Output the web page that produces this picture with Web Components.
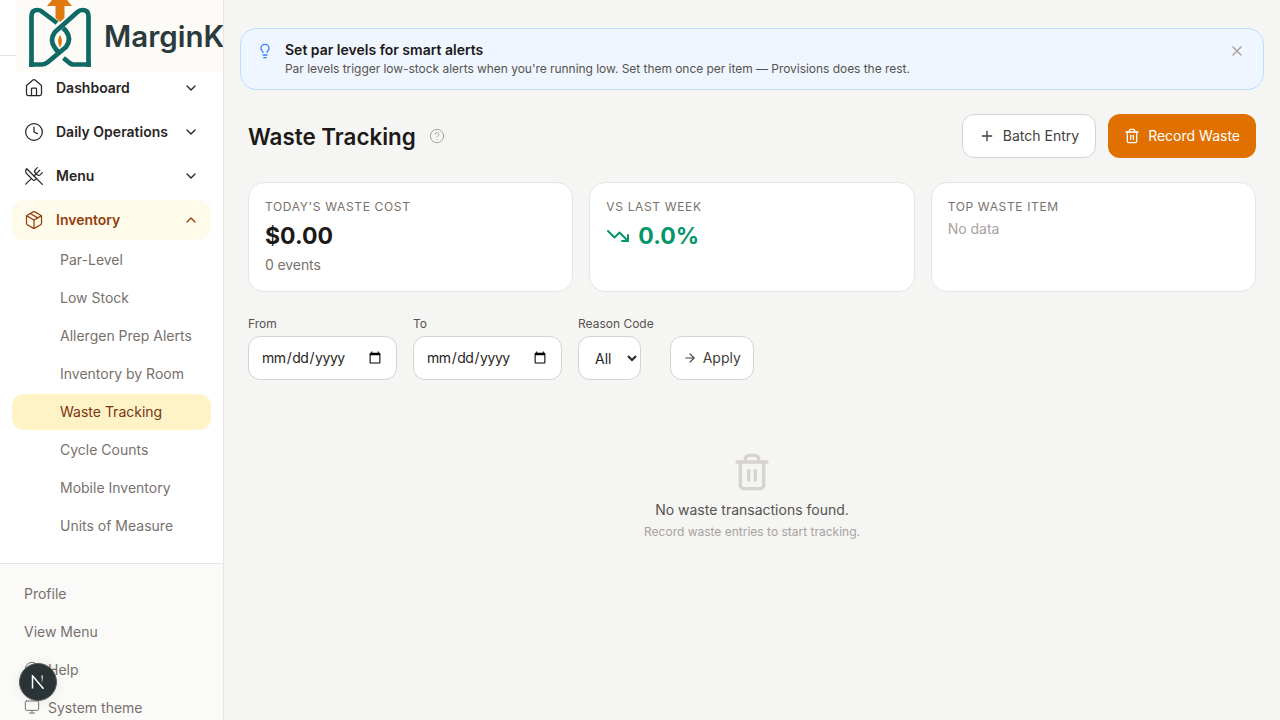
<!DOCTYPE html>
<html lang="en">
<head>
<meta charset="utf-8">
<title>Waste Tracking</title>
<style>
  html, body { margin: 0; height: 100%; }
  body { font-family: Inter, "Liberation Sans", sans-serif; background: #f5f5f4; color: #1c1917; overflow: hidden; }
</style>
</head>
<body>
<app-shell>
  <app-sidebar slot="sidebar">
    <nav-item icon="house" label="Dashboard"></nav-item>
    <nav-item icon="clock" label="Daily Operations"></nav-item>
    <nav-item icon="utensils" label="Menu"></nav-item>
    <nav-item icon="package" label="Inventory" open></nav-item>
    <sub-item>Par-Level</sub-item>
    <sub-item>Low Stock</sub-item>
    <sub-item>Allergen Prep Alerts</sub-item>
    <sub-item>Inventory by Room</sub-item>
    <sub-item active>Waste Tracking</sub-item>
    <sub-item>Cycle Counts</sub-item>
    <sub-item>Mobile Inventory</sub-item>
    <sub-item>Units of Measure</sub-item>
    <foot-item slot="foot">Profile</foot-item>
    <foot-item slot="foot">View Menu</foot-item>
    <foot-item slot="foot" icon="help">Help</foot-item>
    <foot-item slot="foot" icon="monitor">System theme</foot-item>
  </app-sidebar>
  <info-banner heading="Set par levels for smart alerts">Par levels trigger low-stock alerts when you're running low. Set them once per item — Provisions does the rest.</info-banner>
  <page-header heading="Waste Tracking"></page-header>
  <stat-row>
    <stat-card label="Today's Waste Cost" value="$0.00" note="0 events"></stat-card>
    <stat-card label="vs Last Week" value="0.0%" trend></stat-card>
    <stat-card label="Top Waste Item" empty="No data"></stat-card>
  </stat-row>
  <filter-bar></filter-bar>
  <empty-state heading="No waste transactions found." hint="Record waste entries to start tracking."></empty-state>
</app-shell>
<logo-banner></logo-banner>
<dev-badge></dev-badge>

<script>
const ICONS = {
  house: '<path d="M15 21v-8a1 1 0 0 0-1-1h-4a1 1 0 0 0-1 1v8"/><path d="M3 10a2 2 0 0 1 .709-1.528l7-5.999a2 2 0 0 1 2.582 0l7 5.999A2 2 0 0 1 21 10v9a2 2 0 0 1-2 2H5a2 2 0 0 1-2-2z"/>',
  clock: '<circle cx="12" cy="12" r="10"/><polyline points="12 6 12 12 16 14"/>',
  utensils: '<path d="m16 2-2.3 2.3a3 3 0 0 0 0 4.2l1.8 1.8a3 3 0 0 0 4.2 0L22 8"/><path d="M15 15 3.3 3.3a4.2 4.2 0 0 0 0 6l7.3 7.3c.7.7 2 .7 2.8 0L15 15Zm0 0 7 7"/><path d="m2.1 21.8 6.4-6.3"/><path d="m19 5-7 7"/>',
  package: '<path d="m7.5 4.27 9 5.15"/><path d="M21 8a2 2 0 0 0-1-1.73l-7-4a2 2 0 0 0-2 0l-7 4A2 2 0 0 0 3 8v8a2 2 0 0 0 1 1.73l7 4a2 2 0 0 0 2 0l7-4A2 2 0 0 0 21 16Z"/><path d="m3.3 7 8.7 5 8.7-5"/><path d="M12 22V12"/>',
  down: '<path d="m6 9 6 6 6-6"/>',
  up: '<path d="m18 15-6-6-6 6"/>',
  bulb: '<path d="M15 14c.2-1 .7-1.7 1.5-2.5 1-.9 1.5-2.2 1.5-3.5A6 6 0 0 0 6 8c0 1 .2 2.2 1.5 3.5.7.7 1.3 1.5 1.5 2.5"/><path d="M9 18h6"/><path d="M10 22h4"/>',
  help: '<circle cx="12" cy="12" r="10"/><path d="M9.09 9a3 3 0 0 1 5.83 1c0 2-3 3-3 3"/><path d="M12 17h.01"/>',
  x: '<path d="M18 6 6 18"/><path d="m6 6 12 12"/>',
  plus: '<path d="M5 12h14"/><path d="M12 5v14"/>',
  trash: '<path d="M3 6h18"/><path d="M19 6v14c0 1-1 2-2 2H7c-1 0-2-1-2-2V6"/><path d="M8 6V4c0-1 1-2 2-2h4c1 0 2 1 2 2v2"/><line x1="10" y1="11" x2="10" y2="17"/><line x1="14" y1="11" x2="14" y2="17"/>',
  trend: '<polyline points="22 17 13.5 8.5 8.5 13.5 2 7"/><polyline points="16 17 22 17 22 11"/>',
  arrow: '<path d="M5 12h14"/><path d="m12 5 7 7-7 7"/>',
  monitor: '<rect x="2" y="3" width="20" height="14" rx="2"/><line x1="8" y1="21" x2="16" y2="21"/><line x1="12" y1="17" x2="12" y2="21"/>',
};

const icon = (name, size, width = 2) =>
  `<svg width="${size}" height="${size}" viewBox="0 0 24 24" fill="none" stroke="currentColor" stroke-width="${width}" stroke-linecap="round" stroke-linejoin="round" style="display:block;flex:none">${ICONS[name]}</svg>`;

class Base extends HTMLElement {
  constructor() {
    super();
    this.attachShadow({ mode: "open" });
  }
  attr(name) {
    return this.getAttribute(name) || "";
  }
}

class AppShell extends Base {
  connectedCallback() {
    this.shadowRoot.innerHTML = /*html*/ `
      <style>
        :host { display: flex; width: 1280px; height: 720px; overflow: hidden; }
        main { flex: 1; min-width: 0; padding: 28px 16px 0; display: flex; flex-direction: column; }
      </style>
      <slot name="sidebar"></slot>
      <main><slot></slot></main>
    `;
  }
}

class AppSidebar extends Base {
  connectedCallback() {
    this.shadowRoot.innerHTML = /*html*/ `
      <style>
        :host { display: flex; flex-direction: column; flex: none; width: 224px; height: 720px; box-sizing: border-box; background: #fff; border-right: 1px solid #e7e5e4; overflow: hidden; }
        .head { height: 56px; flex: none; box-sizing: border-box; border-bottom: 1px solid #e7e5e4; }
        nav { flex: 1; min-height: 0; padding: 12px 12px 0; display: flex; flex-direction: column; }
        .foot { flex: none; height: 157px; box-sizing: border-box; padding: 11px 12px 0; background: #fafaf9; border-top: 1px solid #e7e5e4; }
      </style>
      <div class="head"></div>
      <nav><slot></slot></nav>
      <div class="foot"><slot name="foot"></slot></div>
    `;
  }
}

class NavItem extends Base {
  connectedCallback() {
    const open = this.hasAttribute("open");
    this.shadowRoot.innerHTML = /*html*/ `
      <style>
        :host { display: flex; flex: none; align-items: center; gap: 12px; height: 40px; margin-bottom: ${open ? 2 : 4}px; padding: 0 12px; border-radius: 12px; font-size: 14px; font-weight: 600; color: ${open ? "#92400e" : "#292524"}; background: ${open ? "#fffbeb" : "transparent"}; }
        span { flex: 1; padding-bottom: 1px; }
      </style>
      ${icon(this.attr("icon"), 20, 1.5)}
      <span>${this.attr("label")}</span>
      ${icon(open ? "up" : "down", 16)}
    `;
  }
}

class SubItem extends Base {
  connectedCallback() {
    const active = this.hasAttribute("active");
    this.shadowRoot.innerHTML = /*html*/ `
      <style>
        :host { display: flex; flex: none; align-items: center; box-sizing: border-box; height: 36px; margin-bottom: 2px; padding: 0 0 1px 48px; border-radius: 12px; font-size: 14px; color: ${active ? "#78350f" : "#78716c"}; background: ${active ? "#fef3c7" : "transparent"}; }
      </style>
      <slot></slot>
    `;
  }
}

class FootItem extends Base {
  connectedCallback() {
    const name = this.attr("icon");
    this.shadowRoot.innerHTML = /*html*/ `
      <style>
        :host { display: flex; align-items: center; gap: 8px; height: 36px; margin-bottom: 2px; padding-left: 12px; font-size: 14px; color: #78716c; }
      </style>
      ${name ? icon(name, 16, 1.5) : ""}
      <slot></slot>
    `;
  }
}

class InfoBanner extends Base {
  connectedCallback() {
    this.shadowRoot.innerHTML = /*html*/ `
      <style>
        :host { display: flex; flex: none; height: 62px; box-sizing: border-box; padding: 12px 18px 0 16px; gap: 12px; background: #eff6ff; border: 1px solid #bfdbfe; border-radius: 16px; }
        .bulb { color: #3b82f6; padding-top: 2px; }
        .body { flex: 1; }
        h2 { margin: 0; font-size: 14px; line-height: 18px; font-weight: 600; color: #1c1917; }
        p { margin: 1px 0 0; font-size: 12px; line-height: 18px; letter-spacing: -0.04px; color: #57534e; }
        .close { color: #a8a29e; padding-top: 2px; }
      </style>
      <div class="bulb">${icon("bulb", 16)}</div>
      <div class="body"><h2>${this.attr("heading")}</h2><p><slot></slot></p></div>
      <div class="close">${icon("x", 16)}</div>
    `;
  }
}

class PageHeader extends Base {
  connectedCallback() {
    this.shadowRoot.innerHTML = /*html*/ `
      <style>
        :host { display: flex; flex: none; align-items: center; height: 44px; margin: 24px 8px 0; }
        h1 { margin: 0; font-size: 22.4px; font-weight: 600; color: #1c1917; }
        .help { margin-left: 13px; color: #a8a29e; }
        .actions { margin-left: auto; display: flex; gap: 12px; }
        button { display: flex; align-items: center; gap: 8px; height: 44px; box-sizing: border-box; border-radius: 12px; padding: 0 16px 1px; font: 400 14px Inter, sans-serif; }
        .ghost { background: #fff; border: 1px solid #d6d3d1; color: #44403c; }
        .primary { background: #e07000; border: 0; color: #fff; }
      </style>
      <h1>${this.attr("heading")}</h1>
      <span class="help">${icon("help", 16, 1.5)}</span>
      <div class="actions">
        <button class="ghost">${icon("plus", 16)}Batch Entry</button>
        <button class="primary">${icon("trash", 16)}Record Waste</button>
      </div>
    `;
  }
}

class StatRow extends Base {
  connectedCallback() {
    this.shadowRoot.innerHTML = /*html*/ `
      <style>
        :host { display: grid; flex: none; grid-template-columns: repeat(3, 1fr); grid-template-rows: 110px; gap: 16px; margin: 24px 8px 0; }
      </style>
      <slot></slot>
    `;
  }
}

class StatCard extends Base {
  connectedCallback() {
    const trend = this.hasAttribute("trend");
    const value = this.attr("value");
    const note = this.attr("note");
    const empty = this.attr("empty");
    this.shadowRoot.innerHTML = /*html*/ `
      <style>
        :host { display: block; box-sizing: border-box; padding: 16px; background: #fff; border: 1px solid #e7e5e4; border-radius: 16px; }
        .label { font-size: 12px; line-height: 16px; letter-spacing: 0.65px; text-transform: uppercase; color: #78716c; }
        .value { display: flex; align-items: center; gap: 8px; margin-top: 5px; font-size: 23px; line-height: 32px; font-weight: 700; color: ${trend ? "#059669" : "#1c1917"}; }
        .note { margin-top: 3px; font-size: 14px; line-height: 20px; letter-spacing: -0.1px; color: #78716c; }
        .empty { margin-top: 4px; font-size: 14px; line-height: 20px; color: #a8a29e; }
      </style>
      <div class="label">${this.attr("label")}</div>
      ${value ? `<div class="value">${trend ? icon("trend", 24) : ""}<span>${value}</span></div>` : ""}
      ${note ? `<div class="note">${note}</div>` : ""}
      ${empty ? `<div class="empty">${empty}</div>` : ""}
    `;
  }
}

class FilterBar extends Base {
  connectedCallback() {
    this.shadowRoot.innerHTML = /*html*/ `
      <style>
        :host { display: flex; flex: none; align-items: flex-end; gap: 16px; margin: 24px 8px 0; }
        label { display: flex; flex-direction: column; align-items: flex-start; gap: 4px; font-size: 12px; line-height: 16px; color: #57534e; }
        input, select, button { height: 44px; box-sizing: border-box; background: #fff; border: 1px solid #d6d3d1; border-radius: 12px; font: 14px Inter, sans-serif; color: #292524; }
        input { width: 149px; padding: 0 12px 1px; }
        input::-webkit-datetime-edit { letter-spacing: -0.45px; }
        select { width: 63px; padding: 0 0 0 12px; }
        button { display: flex; align-items: center; gap: 6px; width: 84px; padding: 0 12px 1px; color: #44403c; }
      </style>
      <label>From<input type="date"></label>
      <label>To<input type="date"></label>
      <label>Reason Code<select><option>All</option></select></label>
      <button>${icon("arrow", 14)}Apply</button>
    `;
  }
}

class EmptyState extends Base {
  connectedCallback() {
    this.shadowRoot.innerHTML = /*html*/ `
      <style>
        :host { display: flex; flex: none; flex-direction: column; align-items: center; margin-top: 72px; }
        .ico { color: #d6d3d1; }
        h3 { margin: 8px 0 0; font-size: 14px; line-height: 20px; font-weight: 400; color: #57534e; }
        p { margin: 4px 0 0; font-size: 12px; line-height: 16px; color: #a8a29e; }
      </style>
      <div class="ico">${icon("trash", 40, 2)}</div>
      <h3>${this.attr("heading")}</h3>
      <p>${this.attr("hint")}</p>
    `;
  }
}

class LogoBanner extends Base {
  connectedCallback() {
    this.shadowRoot.innerHTML = /*html*/ `
      <style>
        :host { position: absolute; left: 16px; top: 0; width: 207px; height: 72px; background: #fdfbf7; overflow: hidden; display: block; }
        svg { position: absolute; left: 0; top: 0; }
        span { position: absolute; left: 88px; top: 17px; font: 600 29.5px/38px Inter, sans-serif; color: #2b3a3d; white-space: nowrap; }
      </style>
      <svg width="84" height="72" viewBox="0 0 84 72" fill="none">
        <path d="M36 0h15l5 6h-7.5v12L44 22l-4.500-4V6H31z" fill="#e07a10"/>
        <g stroke="#0f6a66" stroke-width="4.7" stroke-linejoin="round">
          <path d="M15.500 67V16q0-6 6-6 3 0 5 2L41 23"/>
          <path d="M47 28l3 3q6 8 0 16L32 62q-3 2.500-6 2.500H13"/>
          <path d="M72.500 67V16q0-6-6-6-3 0-5 2L39 32q-6 8 0 16l3 4"/>
          <path d="M47.500 58l6 5q2 1.500 4 1.500H75"/>
        </g>
        <path d="M44 35Q48 41 44 47.500 40 41 44 35z" fill="#e07a10"/>
      </svg>
      <span>MarginK</span>
    `;
  }
}

class DevBadge extends Base {
  connectedCallback() {
    this.shadowRoot.innerHTML = /*html*/ `
      <style>
        :host { position: absolute; left: 19px; top: 663px; width: 38px; height: 38px; box-sizing: border-box; display: flex; align-items: center; justify-content: center; border-radius: 50%; background: #2a3335; border: 1px solid #5a5a5a; box-shadow: 0 0 12px rgba(0,0,0,.08); }
      </style>
      <svg width="14" height="14" viewBox="0 0 14 14" fill="none">
        <defs>
          <linearGradient id="fade" x1="0" y1="0" x2="0" y2="1"><stop offset="0" stop-color="#fff"/><stop offset="1" stop-color="#fff" stop-opacity="0"/></linearGradient>
        </defs>
        <path d="M1.500 13.500V.8l11 13" stroke="#fff" stroke-width="1.5"/>
        <rect x="10.500" y=".5" width="1.400" height="8" fill="url(#fade)"/>
      </svg>
    `;
  }
}

customElements.define("app-shell", AppShell);
customElements.define("app-sidebar", AppSidebar);
customElements.define("nav-item", NavItem);
customElements.define("sub-item", SubItem);
customElements.define("foot-item", FootItem);
customElements.define("info-banner", InfoBanner);
customElements.define("page-header", PageHeader);
customElements.define("stat-row", StatRow);
customElements.define("stat-card", StatCard);
customElements.define("filter-bar", FilterBar);
customElements.define("empty-state", EmptyState);
customElements.define("logo-banner", LogoBanner);
customElements.define("dev-badge", DevBadge);
</script>
</body>
</html>
